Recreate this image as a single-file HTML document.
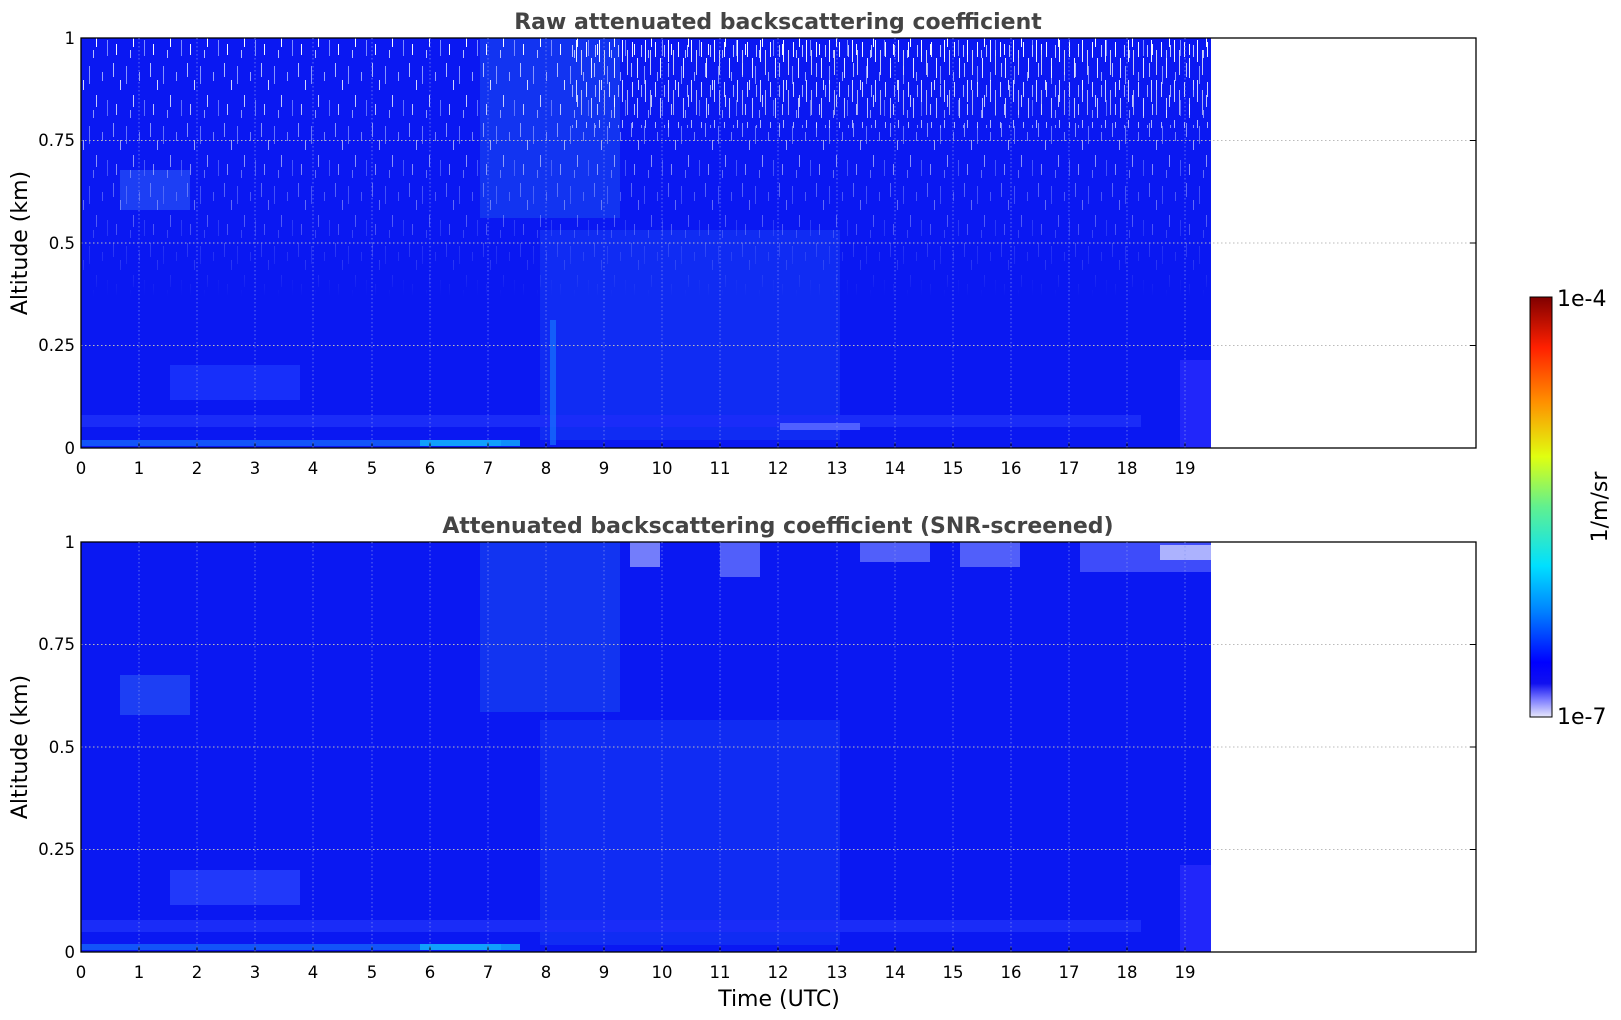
<!DOCTYPE html>
<html><head><meta charset="utf-8"><style>
html,body{margin:0;padding:0;background:#fff;width:1621px;height:1020px;overflow:hidden}
svg{display:block;font-family:"DejaVu Sans","Liberation Sans",sans-serif}
</style></head><body>
<svg width="1621" height="1020" viewBox="0 0 1621 1020" xmlns="http://www.w3.org/2000/svg">
<defs>
<linearGradient id="cb" x1="0" y1="1" x2="0" y2="0">
<stop offset="0" stop-color="#e8e8fb"/><stop offset="0.04" stop-color="#8080ff"/><stop offset="0.08" stop-color="#1010f0"/>
<stop offset="0.13" stop-color="#0000ff"/><stop offset="0.25" stop-color="#0080ff"/><stop offset="0.36" stop-color="#00e0ff"/>
<stop offset="0.5" stop-color="#60f090"/><stop offset="0.62" stop-color="#e0ff10"/><stop offset="0.75" stop-color="#ff9000"/>
<stop offset="0.88" stop-color="#ff2000"/><stop offset="1" stop-color="#800000"/>
</linearGradient>
<pattern id="noise" width="37" height="60" patternUnits="userSpaceOnUse">
<rect x="2" y="3" width="1" height="14" fill="#c8d0ff"/><rect x="9" y="20" width="1" height="10" fill="#fff"/>
<rect x="15" y="6" width="1" height="18" fill="#9aa8ff"/><rect x="22" y="35" width="1" height="12" fill="#fff"/>
<rect x="28" y="12" width="1" height="9" fill="#b0baff"/><rect x="33" y="40" width="1" height="16" fill="#8090ff"/>
<rect x="5" y="44" width="1" height="11" fill="#fff"/><rect x="19" y="50" width="1" height="8" fill="#c0c8ff"/>
</pattern>
<pattern id="noise2" width="23" height="40" patternUnits="userSpaceOnUse">
<rect x="1" y="0" width="1" height="22" fill="#fff"/><rect x="6" y="10" width="1" height="25" fill="#dde"/>
<rect x="11" y="2" width="1" height="15" fill="#fff"/><rect x="16" y="18" width="1" height="20" fill="#fff"/>
<rect x="20" y="5" width="1" height="12" fill="#c8d0ff"/>
</pattern>
<linearGradient id="vfade" x1="0" y1="0" x2="0" y2="1"><stop offset="0" stop-color="#fff" stop-opacity="1"/><stop offset="1" stop-color="#fff" stop-opacity="0"/></linearGradient>
<mask id="m1"><rect x="0" y="38" width="1621" height="260" fill="url(#vfade)"/></mask>
</defs>

<text x="778" y="29" text-anchor="middle" font-size="22" font-weight="bold" fill="#444">Raw attenuated backscattering coefficient</text>
<g>
<rect x="81" y="38" width="1130" height="410" fill="#0a18f2"/>
<rect x="480" y="38" width="140" height="180" fill="#1848f0" opacity="0.6"/>
<rect x="540" y="230" width="300" height="210" fill="#1640f4" opacity="0.5"/>
<rect x="170" y="365" width="130" height="35" fill="#2040ff" opacity="0.6"/>
<rect x="120" y="170" width="70" height="40" fill="#2a5af5" opacity="0.6"/>
<rect x="81" y="415" width="1060" height="12" fill="#1a2cf8"/>
<rect x="780" y="423" width="80" height="7" fill="#5060ff"/>
<rect x="81" y="440" width="420" height="6" fill="#1a90ff" opacity="0.5"/>
<rect x="420" y="440" width="100" height="6" fill="#10c0ff" opacity="0.7"/>
<rect x="550" y="320" width="6" height="125" fill="#1580ff" opacity="0.6"/>
<rect x="1180" y="360" width="31" height="88" fill="#3030ff" opacity="0.6"/>
<rect x="81" y="38" width="1130" height="270" fill="url(#noise)" mask="url(#m1)"/>
<rect x="570" y="38" width="641" height="90" fill="url(#noise2)" mask="url(#m1)"/>
</g>
<g stroke="#bbb" stroke-dasharray="1.5,2.5" stroke-width="1">
<line x1="81" y1="140.5" x2="1476" y2="140.5"/><line x1="81" y1="243" x2="1476" y2="243"/><line x1="81" y1="345.5" x2="1476" y2="345.5"/>
</g>
<rect x="81" y="38" width="1395" height="410" fill="none" stroke="#000" stroke-width="1.3"/>

<text x="778" y="533" text-anchor="middle" font-size="22" font-weight="bold" fill="#444">Attenuated backscattering coefficient (SNR-screened)</text>
<g>
<rect x="81" y="542" width="1130" height="410" fill="#0a18f2"/>
<rect x="480" y="542" width="140" height="170" fill="#1848f0" opacity="0.6"/>
<rect x="540" y="720" width="300" height="225" fill="#1640f4" opacity="0.5"/>
<rect x="170" y="870" width="130" height="35" fill="#3050ff" opacity="0.6"/>
<rect x="120" y="675" width="70" height="40" fill="#2a5af5" opacity="0.6"/>
<rect x="81" y="920" width="1060" height="12" fill="#1a2cf8"/>
<rect x="81" y="944" width="420" height="6" fill="#1a90ff" opacity="0.5"/>
<rect x="420" y="944" width="100" height="6" fill="#10c0ff" opacity="0.7"/>
<rect x="1180" y="865" width="31" height="87" fill="#3030ff" opacity="0.6"/>
<rect x="630" y="542" width="30" height="25" fill="#a0a8ff" opacity="0.7"/>
<rect x="720" y="542" width="40" height="35" fill="#8090ff" opacity="0.6"/>
<rect x="860" y="542" width="70" height="20" fill="#8090ff" opacity="0.6"/>
<rect x="960" y="542" width="60" height="25" fill="#8090ff" opacity="0.6"/>
<rect x="1080" y="542" width="131" height="30" fill="#6070ff" opacity="0.6"/>
<rect x="1160" y="545" width="51" height="15" fill="#c8ccff" opacity="0.8"/>
</g>
<g stroke="#bbb" stroke-dasharray="1.5,2.5" stroke-width="1">
<line x1="81" y1="644.5" x2="1476" y2="644.5"/><line x1="81" y1="747" x2="1476" y2="747"/><line x1="81" y1="849.5" x2="1476" y2="849.5"/>
</g>
<rect x="81" y="542" width="1395" height="410" fill="none" stroke="#000" stroke-width="1.3"/>

<g font-size="16.5" fill="#000" text-anchor="middle">
<text x="81" y="474">0</text><text x="139" y="474">1</text><text x="197" y="474">2</text><text x="255" y="474">3</text><text x="313" y="474">4</text><text x="372" y="474">5</text><text x="430" y="474">6</text><text x="488" y="474">7</text><text x="546" y="474">8</text><text x="604" y="474">9</text><text x="662" y="474">10</text><text x="720" y="474">11</text><text x="778" y="474">12</text><text x="837" y="474">13</text><text x="895" y="474">14</text><text x="953" y="474">15</text><text x="1011" y="474">16</text><text x="1069" y="474">17</text><text x="1127" y="474">18</text><text x="1185" y="474">19</text>
<text x="81" y="978">0</text><text x="139" y="978">1</text><text x="197" y="978">2</text><text x="255" y="978">3</text><text x="313" y="978">4</text><text x="372" y="978">5</text><text x="430" y="978">6</text><text x="488" y="978">7</text><text x="546" y="978">8</text><text x="604" y="978">9</text><text x="662" y="978">10</text><text x="720" y="978">11</text><text x="778" y="978">12</text><text x="837" y="978">13</text><text x="895" y="978">14</text><text x="953" y="978">15</text><text x="1011" y="978">16</text><text x="1069" y="978">17</text><text x="1127" y="978">18</text><text x="1185" y="978">19</text>
</g>
<g font-size="16.5" fill="#000" text-anchor="end">
<text x="75" y="44">1</text><text x="75" y="146">0.75</text><text x="75" y="249">0.5</text><text x="75" y="351">0.25</text><text x="75" y="454">0</text>
<text x="75" y="548">1</text><text x="75" y="650">0.75</text><text x="75" y="753">0.5</text><text x="75" y="855">0.25</text><text x="75" y="958">0</text>
</g>
<g stroke="#000" stroke-width="1">
<path d="M81 448v-6M139 448v-6M197 448v-6M255 448v-6M313 448v-6M372 448v-6M430 448v-6M488 448v-6M546 448v-6M604 448v-6M662 448v-6M720 448v-6M778 448v-6M837 448v-6M895 448v-6M953 448v-6M1011 448v-6M1069 448v-6M1127 448v-6M1185 448v-6"/>
<path d="M81 952v-6M139 952v-6M197 952v-6M255 952v-6M313 952v-6M372 952v-6M430 952v-6M488 952v-6M546 952v-6M604 952v-6M662 952v-6M720 952v-6M778 952v-6M837 952v-6M895 952v-6M953 952v-6M1011 952v-6M1069 952v-6M1127 952v-6M1185 952v-6"/>
<path d="M1476 140.5h-6M1476 243h-6M1476 345.5h-6M1476 644.5h-6M1476 747h-6M1476 849.5h-6"/>
</g>
<g stroke="#8896f0" stroke-dasharray="1.5,2.5" stroke-width="1" opacity="0.7">
<path d="M139 38v410M197 38v410M255 38v410M313 38v410M372 38v410M430 38v410M488 38v410M546 38v410M604 38v410M662 38v410M720 38v410M778 38v410M837 38v410M895 38v410M953 38v410M1011 38v410M1069 38v410M1127 38v410M1185 38v410"/>
<path d="M139 542v410M197 542v410M255 542v410M313 542v410M372 542v410M430 542v410M488 542v410M546 542v410M604 542v410M662 542v410M720 542v410M778 542v410M837 542v410M895 542v410M953 542v410M1011 542v410M1069 542v410M1127 542v410M1185 542v410"/>
</g>

<text transform="translate(27 243) rotate(-90)" text-anchor="middle" font-size="22" fill="#000">Altitude (km)</text>
<text transform="translate(27 747) rotate(-90)" text-anchor="middle" font-size="22" fill="#000">Altitude (km)</text>
<text x="779" y="1006" text-anchor="middle" font-size="22" fill="#000">Time (UTC)</text>

<rect x="1530" y="297" width="22" height="420" fill="url(#cb)" stroke="#000" stroke-width="1"/>
<text x="1557" y="306" font-size="22" fill="#000">1e-4</text>
<text x="1557" y="724" font-size="22" fill="#000">1e-7</text>
<text transform="translate(1607 507) rotate(-90)" text-anchor="middle" font-size="22" fill="#000">1/m/sr</text>
</svg>
</body></html>
